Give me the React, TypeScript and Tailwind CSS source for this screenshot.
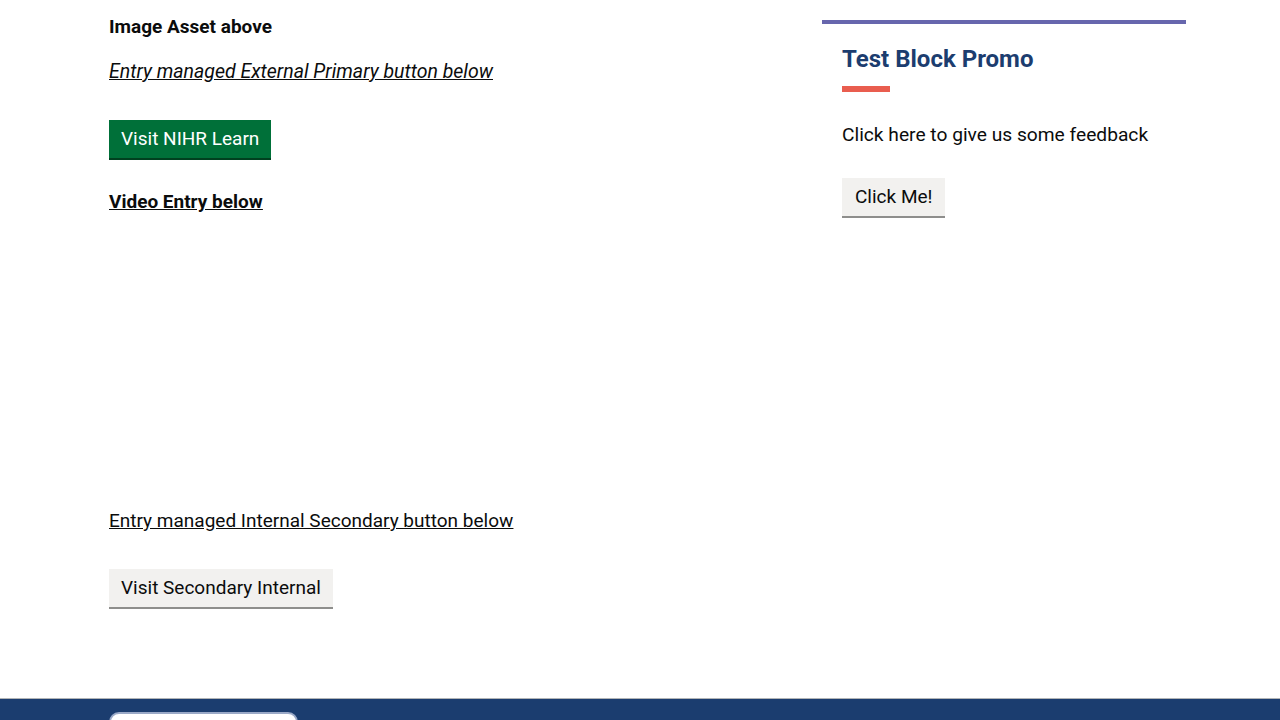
export default function App() {
  return (
    <div className="min-h-screen w-full bg-white flex flex-col text-[#0b0c0c]" style={{ fontFamily: 'Roboto, "Liberation Sans", sans-serif' }}>
      <main className="flex-1 flex pl-[109px] pr-[94px]">
        <section className="flex-1 flex flex-col pt-[14px]">
          <p className="text-[19px] leading-[26px] font-bold">Image Asset above</p>
          <p className="mt-[19px] text-[19.5px] leading-[26px] italic underline">
            <a href="#">Entry managed External Primary button below</a>
          </p>
          <div className="mt-[35px]">
            <a href="#" className="inline-block bg-[#007039] text-white text-[19px] leading-[38px] px-[12px] border-b-2 border-[#00401f]">
              Visit NIHR Learn
            </a>
          </div>
          <p className="mt-[29px] text-[19px] leading-[26px] font-bold underline">
            <a href="#">Video Entry below</a>
          </p>
          <div className="h-[293px]" />
          <p className="text-[19px] leading-[26px] underline">
            <a href="#">Entry managed Internal Secondary button below</a>
          </p>
          <div className="mt-[35px] mb-[89px]">
            <a href="#" className="inline-block bg-[#f2f1ef] text-[19px] leading-[38px] px-[12px] border-b-2 border-[#8e8e8c]">
              Visit Secondary Internal
            </a>
          </div>
        </section>
        <aside className="w-[364px] mt-[20px] self-start border-t-4 border-[#6766ad] px-[20px] pt-[19px]">
          <h2 className="text-[24px] leading-[32px] font-bold text-[#1c3d6f]">Test Block Promo</h2>
          <div className="mt-[11px] w-[48px] h-[6px] bg-[#e95d4f]" />
          <p className="mt-[30px] text-[19.2px] leading-[26px]">Click here to give us some feedback</p>
          <div className="mt-[30px]">
            <a href="#" className="inline-block bg-[#f2f1ef] text-[19px] leading-[38px] px-[13px] border-b-2 border-[#8e8e8c]">
              Click Me!
            </a>
          </div>
        </aside>
      </main>
      <footer className="border-t border-[#b1b4b6] bg-[#1b3d6f] h-[90px] pl-[109px] pt-[13px]">
        <div className="w-[189px] h-[60px] rounded-[10px] bg-white border-2 border-[#9aa9c7]" />
      </footer>
    </div>
  );
}
